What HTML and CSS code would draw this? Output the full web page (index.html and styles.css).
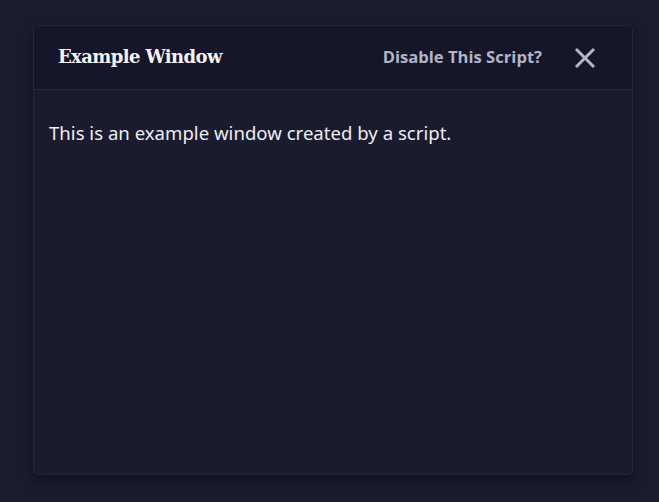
FILE: index.html
```html
<!DOCTYPE html>
<html>
<head>
<meta charset="utf-8">
<link rel="stylesheet" href="styles.css">
</head>
<body>
<div class="window">
  <div class="header">
    <h1 class="title">Example Window</h1>
    <div class="actions">
      <span class="disable">Disable This Script?</span>
      <svg class="close" width="22" height="22" viewBox="0 0 22 22"><path d="M2 2 L20 20 M20 2 L2 20" stroke="#b5b6c6" stroke-width="3" stroke-linecap="butt"/></svg>
    </div>
  </div>
  <div class="content">
    <p class="text">This is an example window created by a script.</p>
  </div>
</div>
</body>
</html>
```
FILE: styles.css
```css
html, body {
  margin: 0;
  padding: 0;
  background: #1b1c30;
  width: 659px;
  height: 502px;
  overflow: hidden;
}
body {
  padding: 25px 0 0 33px;
  box-sizing: border-box;
}
.window {
  width: 600px;
  height: 450px;
  box-sizing: border-box;
  background: #1a1b2e;
  border: 1px solid #25263b;
  border-radius: 5px;
  box-shadow: 0 6px 14px rgba(8, 9, 20, 0.55);
  display: flex;
  flex-direction: column;
  overflow: hidden;
}
.header {
  height: 64px;
  box-sizing: border-box;
  background: #15162a;
  border-bottom: 1px solid #28293f;
  display: flex;
  align-items: center;
  justify-content: space-between;
  padding: 0 36px 0 24px;
}
.title {
  margin: 0;
  font-family: "DejaVu Serif", serif;
  font-weight: bold;
  font-size: 18px;
  color: #f4f4f8;
  letter-spacing: -0.6px;
  position: relative;
  top: -1px;
}
.actions {
  display: flex;
  align-items: center;
  gap: 32px;
}
.disable {
  font-family: "Open Sans", sans-serif;
  font-weight: 700;
  font-size: 16.6px;
  color: #b3b4c4;
  letter-spacing: 0;
  position: relative;
  top: -1px;
}
.close {
  display: block;
}
.content {
  padding: 30px 15px;
}
.text {
  margin: 0;
  font-family: "Noto Sans", sans-serif;
  font-size: 18.6px;
  color: #eeeef4;
}
```
